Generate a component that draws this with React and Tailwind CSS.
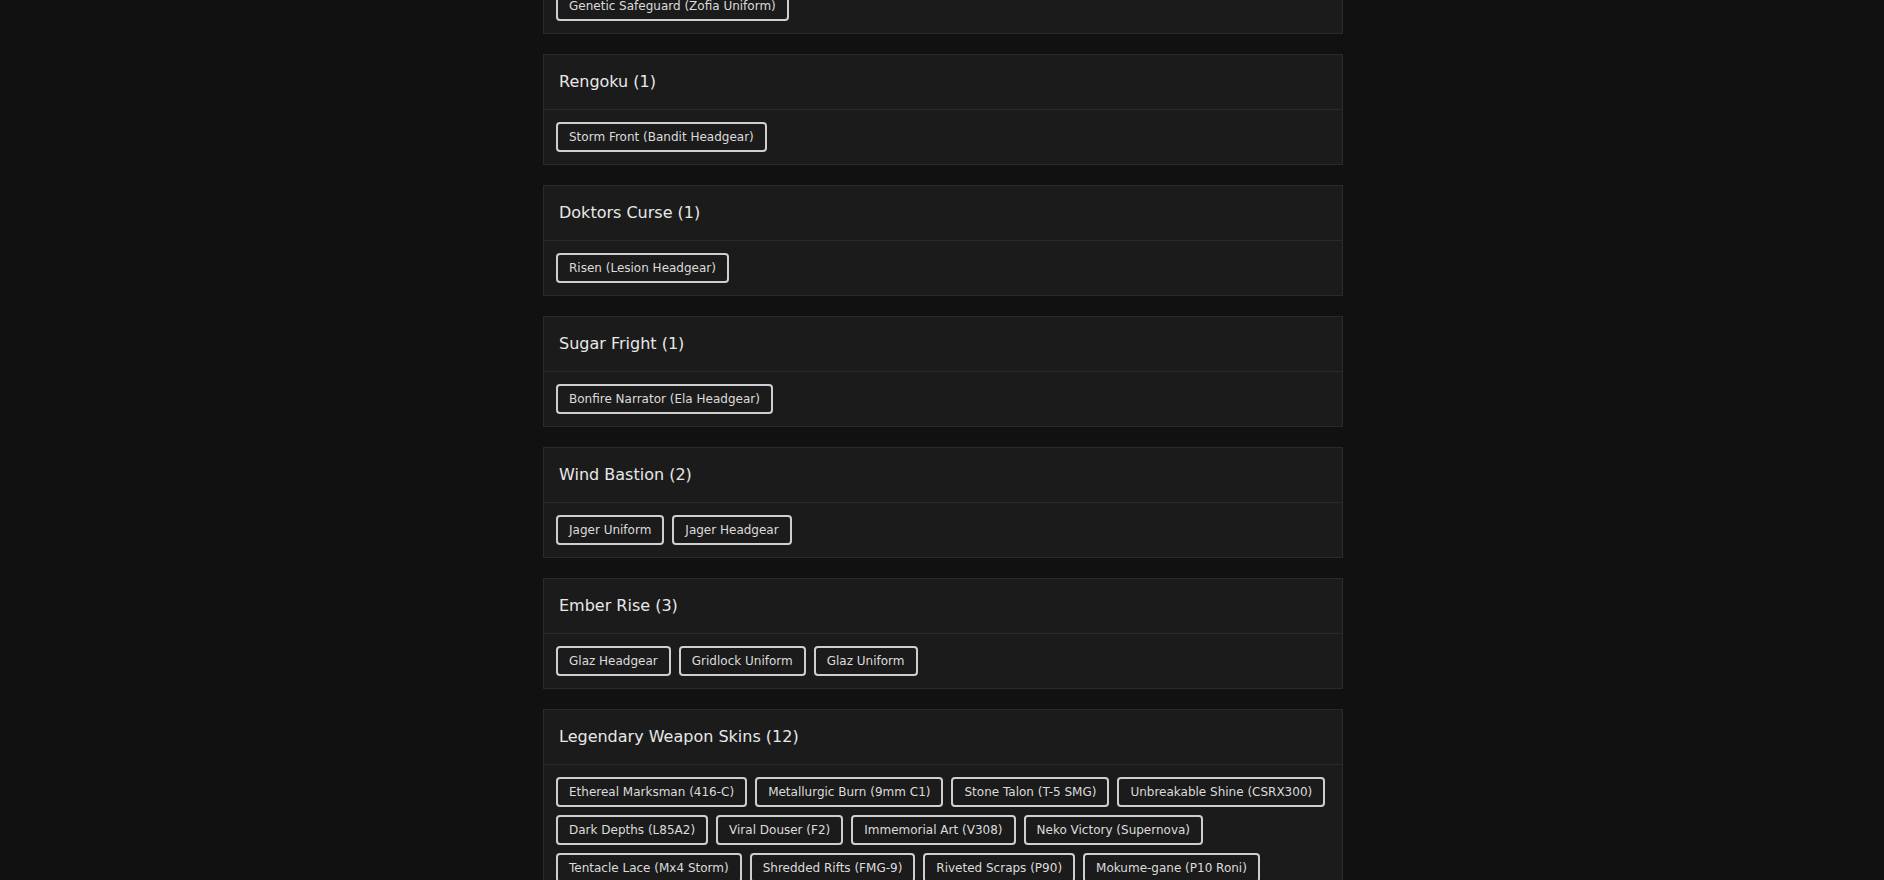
import React from 'react';

const collections = [
    { title: 'Apocalypse (1)', items: ['Genetic Safeguard (Zofia Uniform)'] },
    { title: 'Rengoku (1)', items: ['Storm Front (Bandit Headgear)'] },
    { title: 'Doktors Curse (1)', items: ['Risen (Lesion Headgear)'] },
    { title: 'Sugar Fright (1)', items: ['Bonfire Narrator (Ela Headgear)'] },
    { title: 'Wind Bastion (2)', items: ['Jager Uniform', 'Jager Headgear'] },
    { title: 'Ember Rise (3)', items: ['Glaz Headgear', 'Gridlock Uniform', 'Glaz Uniform'] },
    {
        title: 'Legendary Weapon Skins (12)',
        items: [
            'Ethereal Marksman (416-C)',
            'Metallurgic Burn (9mm C1)',
            'Stone Talon (T-5 SMG)',
            'Unbreakable Shine (CSRX300)',
            'Dark Depths (L85A2)',
            'Viral Douser (F2)',
            'Immemorial Art (V308)',
            'Neko Victory (Supernova)',
            'Tentacle Lace (Mx4 Storm)',
            'Shredded Rifts (FMG-9)',
            'Riveted Scraps (P90)',
            'Mokume-gane (P10 Roni)',
        ],
    },
];

const CollectionCard = ({ title, items }) => (
    <section className="border border-[#2a2a2a] bg-[#1b1b1b]">
        {/* Header */}
        <div className="border-b border-[#2a2a2a] px-[15px] py-[15px]">
            <h2 className="text-base leading-6 font-medium text-[#e8e8e8]">{title}</h2>
        </div>

        <div className="flex flex-wrap gap-2 p-3">
            {items.map(item => (
                <span
                    key={item}
                    className="rounded-[4px] border-2 border-[#cfcfcf] px-[11px] py-[5px] text-xs leading-4 text-[#dcdcdc]"
                >
                    {item}
                </span>
            ))}
        </div>
    </section>
);

export default function App() {
    return (
        <div
            className="flex min-h-screen justify-center overflow-hidden bg-[#111111] pl-[2px]"
            style={{ fontFamily: '"DejaVu Sans", sans-serif' }}
        >
            <main className="-mt-[77px] flex w-[800px] flex-col gap-5 pb-10">
                {collections.map(c => (
                    <CollectionCard key={c.title} title={c.title} items={c.items} />
                ))}
            </main>
        </div>
    );
}
